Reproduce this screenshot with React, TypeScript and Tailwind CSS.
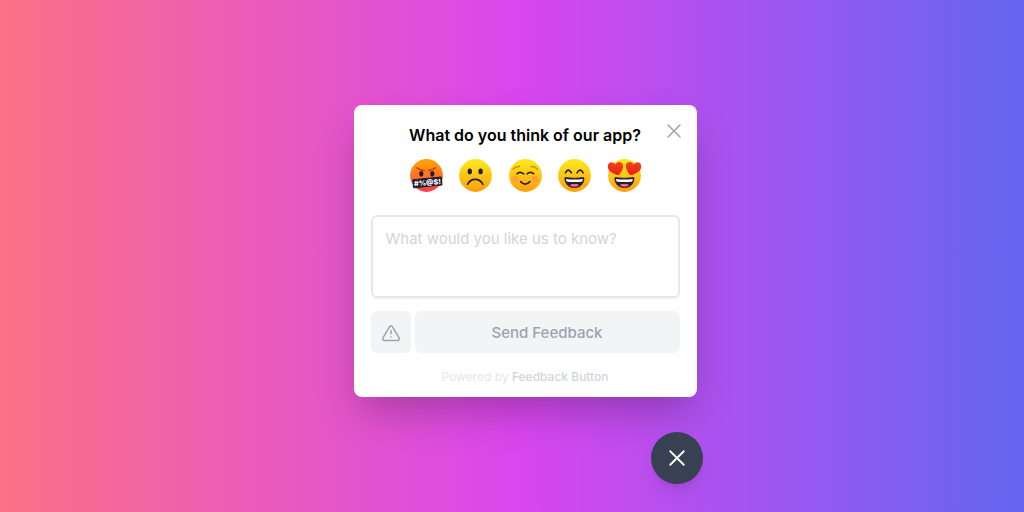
import { useState, type ReactNode } from "react";

function Face({ id, from, to, children }: { id: string; from: string; to: string; children: ReactNode }) {
  return (
    <svg viewBox="0 0 33 33" className="block size-[33px] overflow-visible" aria-hidden="true">
      <defs>
        <linearGradient id={id} x1="0" y1="0" x2="0" y2="1">
          <stop offset="0.1" stopColor={from} />
          <stop offset="1" stopColor={to} />
        </linearGradient>
      </defs>
      <circle cx="16.5" cy="16.5" r="16.4" fill={`url(#${id})`} />
      {children}
    </svg>
  );
}

function Angry() {
  return (
    <Face id="face-angry" from="#ff9f05" to="#ff3a50">
      <path d="M7 8.8Q9.5 11.3 14 11.5M25.5 8.8Q23 11.3 18.7 11.5" fill="none" stroke="#d42a10" strokeWidth="1.4" strokeLinecap="round" />
      <ellipse cx="11.3" cy="14.8" rx="2.1" ry="2.8" fill="#241f38" />
      <ellipse cx="22.3" cy="14.8" rx="2.1" ry="2.8" fill="#241f38" />
      <path d="M2.8 20.8 31.4 18 32 26 3.6 28.8Z" fill="#1d1b30" stroke="#1d1b30" strokeLinejoin="round" />
      <text x="17.4" y="26.2" transform="rotate(-5 17.4 24)" textAnchor="middle" fontFamily="Inter, sans-serif" fontSize="7.2" fontWeight="800" fill="#fff">#%@$!</text>
    </Face>
  );
}

function Sad() {
  return (
    <Face id="face-sad" from="#fde41c" to="#ff9d0a">
      <ellipse cx="10.8" cy="12.4" rx="2.2" ry="2.9" fill="#241f38" />
      <ellipse cx="21.6" cy="12.4" rx="2.2" ry="2.9" fill="#241f38" />
      <path d="M8.6 25.4Q11 20.4 16.2 20.4T23.9 25.4" fill="none" stroke="#241f38" strokeWidth="1.6" strokeLinecap="round" />
    </Face>
  );
}

function Pleased() {
  return (
    <Face id="face-pleased" from="#fde41c" to="#ff9d0a">
      <circle cx="6.6" cy="20" r="3.2" fill="#ff8a4c" opacity="0.55" />
      <circle cx="26" cy="20" r="3.2" fill="#ff8a4c" opacity="0.55" />
      <path d="M4 10.2Q6.5 7.4 10.8 7.5M28.6 10.2Q26.1 7.4 21.8 7.5" fill="none" stroke="#d99108" strokeWidth="1.3" strokeLinecap="round" />
      <path d="M8 14.8Q11 11.8 14.7 14.8M18 14.8Q21.6 11.8 24.7 14.8M11.6 22.6Q16.2 27.6 20.9 22.6" fill="none" stroke="#241f38" strokeWidth="1.6" strokeLinecap="round" />
    </Face>
  );
}

function LaughingMouth() {
  return (
    <>
      <path d="M6.9 18.6Q16.4 20 25.9 18.6C26.2 25 22 28.6 16.4 28.6S6.6 25 6.9 18.6Z" fill="#241f38" stroke="#241f38" strokeWidth="0.8" strokeLinejoin="round" />
      <path d="M8 19.9Q16.4 21.1 24.8 19.9 24.8 22.5 23.4 22.8 16.4 23.4 9.4 22.8 8 22.5 8 19.9Z" fill="#fff" />
      <path d="M11.7 26.3Q13.5 24.6 16.4 25.3 19.3 24.6 21.1 26.3 16.4 29 11.7 26.3Z" fill="#ff7181" />
    </>
  );
}

function Happy() {
  return (
    <Face id="face-happy" from="#fde41c" to="#ff9d0a">
      <path d="M7.4 13.8Q10.2 8.4 13.4 13.8M19 13.8Q22.2 8.4 25.2 13.8" fill="none" stroke="#241f38" strokeWidth="1.6" strokeLinecap="round" />
      <LaughingMouth />
    </Face>
  );
}

function InLove() {
  return (
    <Face id="face-love" from="#fde41c" to="#ff9d0a">
      <defs>
        <linearGradient id="heart" x1="0" y1="0" x2="0" y2="1">
          <stop offset="0" stopColor="#f5401f" />
          <stop offset="1" stopColor="#e81e18" />
        </linearGradient>
      </defs>
      <path d="M10.6 16.2C5 14.6-.2 12.2-.2 7.4-.2 3 5 1.8 7.3 5.8 8.6 2 14.2 1.9 15 6.2 15.6 10 12.6 14 10.6 16.2Z" fill="url(#heart)" />
      <path d="M22.4 16.2C28 14.6 33.2 12.2 33.2 7.4 33.2 3 28 1.8 25.7 5.8 24.4 2 18.8 1.9 18 6.2 17.4 10 20.4 14 22.4 16.2Z" fill="url(#heart)" />
      <LaughingMouth />
    </Face>
  );
}

function Cross({ className }: { className: string }) {
  return (
    <svg viewBox="0 0 16 16" className={className} fill="none" stroke="currentColor" strokeLinecap="round" aria-hidden="true">
      <path d="M2 2 14 14M14 2 2 14" />
    </svg>
  );
}

const ratings = [
  { label: "Furious", icon: <Angry /> },
  { label: "Unhappy", icon: <Sad /> },
  { label: "Pleased", icon: <Pleased /> },
  { label: "Happy", icon: <Happy /> },
  { label: "Love it", icon: <InLove /> },
];

export default function App() {
  const [message, setMessage] = useState("");

  return (
    <main className="flex min-h-screen justify-center bg-linear-to-r/srgb from-[#fb7185] via-[#d946ef] via-51% to-[#6366f1] pt-[105px] pb-7 pl-8 font-['Inter',sans-serif]">
      <div className="flex w-full max-w-[349px] flex-col items-end gap-[35px]">
        <section className="mr-[6px] flex w-[calc(100%-6px)] flex-col rounded-lg bg-white px-[17px] pt-[18px] pb-3 shadow-[0_20px_40px_-6px_rgba(0,0,0,0.25)]">
          <header className="-mr-2 -ml-2 grid grid-cols-[1fr_auto_1fr] items-start">
            <h1 className="col-start-2 text-[16px] leading-6 font-semibold text-black">What do you think of our app?</h1>
            <button type="button" aria-label="Close form" className="mr-[6px] justify-self-end text-[#9ca3af]">
              <Cross className="block size-4 stroke-[1.5]" />
            </button>
          </header>

          <div className="mx-auto mt-3 flex w-[231px] justify-between">
            {ratings.map((rating) => (
              <button key={rating.label} type="button" aria-label={rating.label}>
                {rating.icon}
              </button>
            ))}
          </div>

          <textarea
            aria-label="What would you like us to know?"
            placeholder="What would you like us to know?"
            value={message}
            onChange={(event) => setMessage(event.target.value)}
            className="mt-[23px] block h-[83px] w-full resize-none rounded-md border-2 border-[#e5e7eb] px-[13px] py-[10px] text-[15px] leading-6 text-gray-800 shadow-xs outline-none placeholder:text-[#d1d5db]"
          />

          <div className="mt-[13px] flex gap-1">
            <button type="button" aria-label="Report a problem" className="flex h-[42px] w-10 items-center justify-center rounded-md bg-[#f3f4f6] pt-[2px] text-[#9ca3af]">
              <svg viewBox="0 0 24 24" className="size-5" fill="none" stroke="currentColor" strokeWidth="1.8" strokeLinecap="round" strokeLinejoin="round" aria-hidden="true">
                <path d="M12 9.4v3.4M12 16.5v.1M10.2 4.6 2.3 17.9a2.1 2.1 0 0 0 1.8 3.1h15.8a2.1 2.1 0 0 0 1.8-3.1L13.8 4.6a2.1 2.1 0 0 0-3.6 0Z" />
              </svg>
            </button>
            <button type="button" className="h-[42px] flex-1 rounded-md bg-[#f3f4f6] pt-[2px] text-[15px] leading-6 font-medium text-[#9ca3af]">
              Send Feedback
            </button>
          </div>

          <p className="mt-4 text-center text-[12px] leading-4 text-[#e5e7eb]">
            Powered by{" "}
            <a href="#feedback-button" className="font-medium text-[#d1d5db]">Feedback Button</a>
          </p>
        </section>

        <button type="button" aria-label="Close feedback" className="flex size-[52px] items-center justify-center rounded-full bg-[#374151] text-white shadow-lg">
          <Cross className="size-[18px] stroke-[1.6]" />
        </button>
      </div>
    </main>
  );
}
